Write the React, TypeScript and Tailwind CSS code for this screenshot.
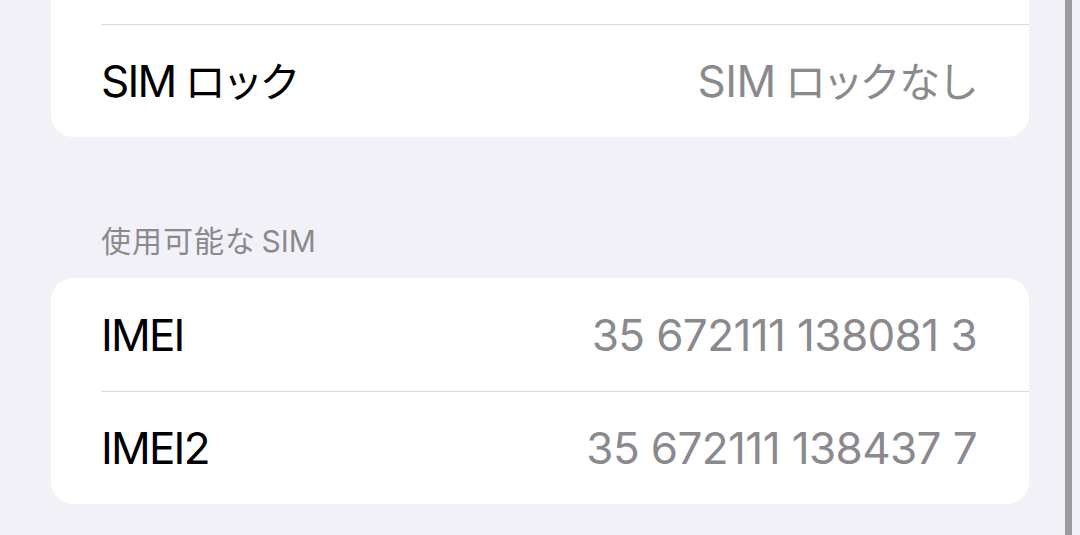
import type { ReactNode } from "react";

const font = {
  fontFamily: '"Inter", "Noto Sans CJK JP", sans-serif',
};

// iOS puts a small gap between Latin and Japanese runs
function Jp({ children }: { children: ReactNode }) {
  return (
    <span className="ml-[10px] text-[41px] [font-feature-settings:'palt'] tracking-[1.5px]">{children}</span>
  );
}

function Row({ label, value, divider }: { label: ReactNode; value: ReactNode; divider?: boolean }) {
  return (
    <div
      className={`flex h-[113px] items-center justify-between pr-[52px] ${
        divider ? "border-t border-[#d9d9de]" : ""
      }`}
    >
      <span className="text-[44px] leading-none tracking-[-1.8px] text-black">{label}</span>
      <span className="text-[44px] leading-none tracking-[-0.6px] text-[#8a8a8e]">{value}</span>
    </div>
  );
}

export default function App() {
  return (
    <div className="flex h-[535px] w-[1080px] overflow-hidden bg-[#f2f1f7]" style={font}>
      <div className="flex w-[1029px] flex-col pl-[51px]">
        <div className="rounded-b-[22px] bg-white pl-[50px]">
          <div className="h-[24px]" />
          <Row
            label={<>SIM<Jp>ロック</Jp></>}
            value={<>SIM<Jp>ロックなし</Jp></>}
            divider
          />
        </div>

        <div className="mt-[86px] pl-[50px] text-[30px] leading-[36px] text-[#8a8a8e]">
          <span className="[font-feature-settings:'palt'] tracking-[1px]">使用可能な</span>
          <span className="ml-[6px]">SIM</span>
        </div>

        <div className="mt-[19px] rounded-[22px] bg-white pl-[50px]">
          <Row label="IMEI" value="35 672111 138081 3" />
          <Row label="IMEI2" value="35 672111 138437 7" divider />
        </div>
      </div>
      <div className="ml-[36px] h-full w-[7px] bg-[#9b9ba0]" />
    </div>
  );
}
